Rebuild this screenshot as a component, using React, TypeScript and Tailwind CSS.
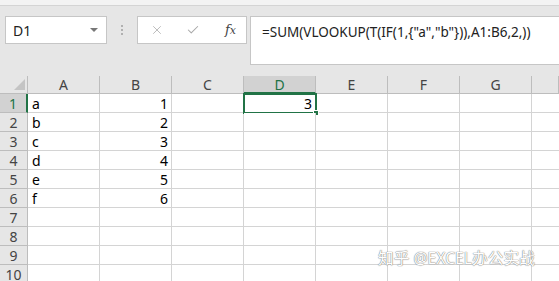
import { X, Check } from "lucide-react";

const cols = ["A", "B", "C", "D", "E", "F", "G", ""];
const rows = [
  ["a", "1"],
  ["b", "2"],
  ["c", "3"],
  ["d", "4"],
  ["e", "5"],
  ["f", "6"],
  ["", ""],
  ["", ""],
  ["", ""],
  ["", ""],
];

export default function App() {
  return (
    <div className="relative w-[559px] h-[281px] overflow-hidden bg-[#e6e6e6] font-['Noto_Sans','Noto_Sans_CJK_SC',sans-serif] text-black">
      {/* ribbon edge */}
      <div className="h-[6px] bg-[#f3f3f3] border-b border-[#d4d4d4]" />

      {/* formula bar */}
      <div className="flex items-start pt-[10px]">
        <div className="ml-[5px] w-[102px] h-[28px] bg-white border border-[#c6c6c6] flex items-center justify-between pl-[7px] pr-[8px]">
          <span className="text-[14px] text-[#222]">D1</span>
          <span className="w-0 h-0 border-l-[4px] border-r-[4px] border-t-[4px] border-l-transparent border-r-transparent border-t-[#777]" />
        </div>
        <div className="w-[30px] h-[28px] flex flex-col items-center justify-center gap-[2px]">
          <span className="w-[2px] h-[2px] bg-[#b0b0b0]" />
          <span className="w-[2px] h-[2px] bg-[#b0b0b0]" />
          <span className="w-[2px] h-[2px] bg-[#b0b0b0]" />
        </div>
        <div className="w-[110px] h-[28px] bg-white border border-[#c6c6c6] flex items-center pl-[12px] pr-[10px]">
          <X size={14} strokeWidth={1.3} className="text-[#a8a8a8]" />
          <Check size={14} strokeWidth={1.8} className="ml-[22px] text-[#a8a8a8]" />
          <span className="ml-auto font-['DejaVu_Serif',serif] italic text-[13px] text-[#444]">
            f<span className="text-[11px]">x</span>
          </span>
        </div>
        <div className="ml-[3px] flex-1 h-[49px] bg-white border border-r-0 border-[#c6c6c6] pl-[11px] pt-[5px] text-[13.5px] text-[#222]">
          {'=SUM(VLOOKUP(T(IF(1,{"a","b"})),A1:B6,2,))'}
        </div>
      </div>

      {/* sheet */}
      <div className="mt-[11px] grid grid-cols-[28px_repeat(7,72px)_1fr] grid-rows-[18px_repeat(10,19px)]">
        <div className="border-r border-b border-[#bdbdbd] flex items-end justify-end pr-[2px] pb-[3px]">
          <span className="w-0 h-0 border-l-[11px] border-t-[11px] border-l-transparent border-t-transparent border-b-0 border-r-0 [border-bottom:11px_solid_#c4c4c4]" />
        </div>
        {cols.map((c, i) => (
          <div
            key={c + i}
            className={
              c === "D"
                ? "bg-[#d2d2d2] border-r border-[#bdbdbd] border-b-2 border-b-[#217346] flex items-center justify-center text-[14px] text-[#217346]"
                : "border-r border-b border-[#bdbdbd] flex items-center justify-center text-[14px] text-[#444]"
            }
          >
            {c}
          </div>
        ))}
        {rows.map((r, ri) => (
          <Row key={ri} n={ri + 1} a={r[0]} b={r[1]} />
        ))}
      </div>

      {/* watermark */}
      <div className="absolute left-[378px] top-[247px] text-[15.7px] text-white [text-shadow:0_0_1px_#777,0_0_1px_#777]">
        知乎 @EXCEL办公实战
      </div>
    </div>
  );
}

function Row({ n, a, b }: { n: number; a: string; b: string }) {
  const sel = n === 1;
  return (
    <>
      <div
        className={
          sel
            ? "bg-[#d2d2d2] border-b border-[#bdbdbd] border-r-2 border-r-[#217346] flex items-center justify-center text-[14px] text-[#217346]"
            : "bg-[#e6e6e6] border-r border-b border-[#bdbdbd] flex items-center justify-center text-[14px] text-[#444]"
        }
      >
        {n}
      </div>
      <div className="bg-white border-r border-b border-[#d4d4d4] flex items-center pl-[4px] text-[14px]">{a}</div>
      <div className="bg-white border-r border-b border-[#d4d4d4] flex items-center justify-end pr-[3px] text-[14px]">{b}</div>
      <div className="bg-white border-r border-b border-[#d4d4d4]" />
      <div className="relative bg-white border-r border-b border-[#d4d4d4] flex items-center justify-end pr-[3px] text-[14px]">
        {sel && "3"}
        {sel && (
          <div className="absolute -left-[1px] -top-[1px] w-[74px] h-[21px] border-2 border-[#217346]">
            <div className="absolute -right-[4px] -bottom-[4px] w-[6px] h-[6px] bg-[#217346] border border-white" />
          </div>
        )}
      </div>
      <div className="bg-white border-r border-b border-[#d4d4d4]" />
      <div className="bg-white border-r border-b border-[#d4d4d4]" />
      <div className="bg-white border-r border-b border-[#d4d4d4]" />
      <div className="bg-white border-b border-[#d4d4d4]" />
    </>
  );
}
